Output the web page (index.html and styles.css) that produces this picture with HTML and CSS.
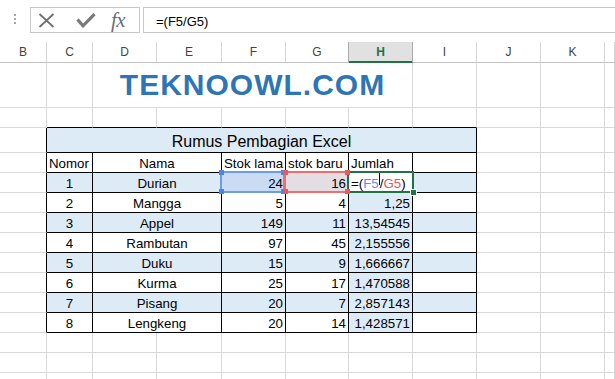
FILE: index.html
```html
<!DOCTYPE html>
<html>
<head>
<meta charset="utf-8">
<link rel="stylesheet" href="styles.css">
</head>
<body>
<div class="formula-bar">
  <div class="fb-dots"><i></i><i></i><i></i></div>
  <div class="fb-buttons">
    <svg class="ic-x" width="17" height="15" viewBox="0 0 17 15"><path d="M1.5 1 L15.5 14 M15.5 1 L1.5 14" stroke="#707070" stroke-width="1.8" fill="none"/></svg>
    <svg class="ic-ok" width="20" height="15" viewBox="0 0 20 15"><path d="M1.5 6.5 L7 12.8 L18.5 1.2" stroke="#7a7a7a" stroke-width="3.2" fill="none"/></svg>
    <span class="ic-fx">fx</span>
  </div>
  <div class="fb-input">=(F5/G5)</div>
</div>
<div class="sheet">
  <div class="hd">B</div><div class="hd">C</div><div class="hd">D</div><div class="hd">E</div><div class="hd">F</div><div class="hd hd-pre">G</div><div class="hd hd-on">H</div><div class="hd">I</div><div class="hd">J</div><div class="hd">K</div><div class="hd"></div>

  <div class="c"></div><div class="c"></div><div class="c brand span5">TEKNOOWL.COM</div><div class="c"></div><div class="c"></div><div class="c"></div><div class="c"></div>

  <div class="c"></div><div class="c ab"></div><div class="c ab"></div><div class="c ab"></div><div class="c ab"></div><div class="c ab"></div><div class="c ab"></div><div class="c ab"></div><div class="c"></div><div class="c"></div><div class="c"></div>

  <div class="c lb"></div><div class="c t bl title span7">Rumus Pembagian Excel</div><div class="c"></div><div class="c"></div><div class="c"></div>

  <div class="c lb"></div><div class="c t">Nomor</div><div class="c t ctr span2">Nama</div><div class="c t">Stok lama</div><div class="c t">stok baru</div><div class="c t">Jumlah</div><div class="c t"></div><div class="c"></div><div class="c"></div><div class="c"></div>

  <div class="c lb"></div><div class="c t ctr bl">1</div><div class="c t ctr span2 bl">Durian</div>
  <div class="c t rt sel sel-f">24<span class="rng rng-f"><i class="hn tl"></i><i class="hn tr"></i><i class="hn bl-c"></i><i class="hn br"></i></span></div>
  <div class="c t rt sel sel-g">16<span class="rng rng-g"><i class="hn tl"></i><i class="hn tr"></i><i class="hn bl-c"></i><i class="hn br"></i></span></div>
  <div class="c t sel act"><span class="ftxt">=(<span class="rf">F5</span><span class="caret"></span>/<span class="rg">G5</span>)</span><span class="act-box"><i class="fill"></i></span></div>
  <div class="c t bl"></div><div class="c"></div><div class="c"></div><div class="c"></div>

  <div class="c lb"></div><div class="c t ctr">2</div><div class="c t ctr span2">Mangga</div><div class="c t rt">5</div><div class="c t rt">4</div><div class="c t rt bl">1,25</div><div class="c t"></div><div class="c"></div><div class="c"></div><div class="c"></div>

  <div class="c lb"></div><div class="c t ctr bl">3</div><div class="c t ctr span2 bl">Appel</div><div class="c t rt bl">149</div><div class="c t rt bl">11</div><div class="c t rt bl">13,54545</div><div class="c t bl"></div><div class="c"></div><div class="c"></div><div class="c"></div>

  <div class="c lb"></div><div class="c t ctr">4</div><div class="c t ctr span2">Rambutan</div><div class="c t rt">97</div><div class="c t rt">45</div><div class="c t rt bl">2,155556</div><div class="c t"></div><div class="c"></div><div class="c"></div><div class="c"></div>

  <div class="c lb"></div><div class="c t ctr bl">5</div><div class="c t ctr span2 bl">Duku</div><div class="c t rt bl">15</div><div class="c t rt bl">9</div><div class="c t rt bl">1,666667</div><div class="c t bl"></div><div class="c"></div><div class="c"></div><div class="c"></div>

  <div class="c lb"></div><div class="c t ctr">6</div><div class="c t ctr span2">Kurma</div><div class="c t rt">25</div><div class="c t rt">17</div><div class="c t rt bl">1,470588</div><div class="c t"></div><div class="c"></div><div class="c"></div><div class="c"></div>

  <div class="c lb"></div><div class="c t ctr bl">7</div><div class="c t ctr span2 bl">Pisang</div><div class="c t rt bl">20</div><div class="c t rt bl">7</div><div class="c t rt bl">2,857143</div><div class="c t bl"></div><div class="c"></div><div class="c"></div><div class="c"></div>

  <div class="c lb"></div><div class="c t ctr">8</div><div class="c t ctr span2">Lengkeng</div><div class="c t rt">20</div><div class="c t rt">14</div><div class="c t rt bl">1,428571</div><div class="c t"></div><div class="c"></div><div class="c"></div><div class="c"></div>

  <div class="c"></div><div class="c"></div><div class="c"></div><div class="c"></div><div class="c"></div><div class="c"></div><div class="c"></div><div class="c"></div><div class="c"></div><div class="c"></div><div class="c"></div>
  <div class="c"></div><div class="c"></div><div class="c"></div><div class="c"></div><div class="c"></div><div class="c"></div><div class="c"></div><div class="c"></div><div class="c"></div><div class="c"></div><div class="c"></div>
  <div class="c"></div><div class="c"></div><div class="c"></div><div class="c"></div><div class="c"></div><div class="c"></div><div class="c"></div><div class="c"></div><div class="c"></div><div class="c"></div><div class="c"></div>
</div>
</body>
</html>
```

FILE: styles.css
```css
html, body {
  margin: 0;
  padding: 0;
  background: #ffffff;
}
body {
  width: 615px;
  height: 379px;
  overflow: hidden;
  font-family: "Liberation Sans", Arial, sans-serif;
  color: #000;
}

/* formula bar */
.formula-bar {
  display: flex;
  align-items: flex-start;
  height: 42px;
  padding-top: 7px;
  box-sizing: border-box;
}
.fb-dots {
  width: 30px;
  display: flex;
  flex-direction: column;
  align-items: center;
  gap: 2px;
  padding-top: 7px;
  padding-right: 1px;
  box-sizing: border-box;
}
.fb-dots i {
  display: block;
  width: 2px;
  height: 2px;
  background: #a6a6a6;
}
.fb-buttons {
  width: 110px;
  height: 26px;
  border: 1px solid #c8c8c8;
  box-sizing: border-box;
  display: flex;
  align-items: center;
}
.ic-x { margin-left: 7px; display: block; }
.ic-ok { margin-left: 21px; display: block; }
.ic-fx {
  margin-left: 15px;
  font-family: "Liberation Serif", "Times New Roman", serif;
  font-style: italic;
  font-size: 21px;
  line-height: 20px;
  color: #6e6e6e;
  letter-spacing: -0.5px;
}
.fb-input {
  flex: 1;
  margin-left: 3px;
  height: 26px;
  border: 1px solid #c8c8c8;
  border-right: none;
  box-sizing: border-box;
  padding: 3px 0 0 12px;
  font-size: 13px;
  line-height: 21px;
  color: #000;
}

/* sheet grid */
.sheet {
  display: grid;
  grid-template-columns: 47px 46px 64px 65px 64px 63px 64px 64px 64px 64px 10px;
  grid-template-rows: 21px 45px 20px 25px repeat(12, 20px);
}
.hd {
  border-right: 1px solid #d6d6d6;
  border-bottom: 1px solid #c2c2c2;
  box-sizing: border-box;
  text-align: center;
  font-size: 12px;
  line-height: 20px;
  color: #444;
}
.hd-pre { border-right-color: #ababab; }
.hd-on {
  background: #e1e1e1;
  border-right-color: #ababab;
  border-bottom-color: #217346;
  box-shadow: inset 0 -1px 0 #217346;
  color: #217346;
  font-weight: bold;
}

.c {
  display: flex;
  align-items: flex-end;
  padding: 0 2px;
  border-right: 1px solid #d9d9d9;
  border-bottom: 1px solid #d9d9d9;
  box-sizing: border-box;
  font-size: 13.3px;
  line-height: 16px;
  white-space: nowrap;
  min-width: 0;
}
.t {
  border-right-color: #000;
  border-bottom-color: #000;
}
.lb { border-right-color: #000; }
.ab { border-bottom-color: #000; }
.bl { background: #ddebf7; }
.ctr { justify-content: center; }
.rt { justify-content: flex-end; }
.span2 { grid-column: span 2; }
.span5 { grid-column: span 5; }
.span7 { grid-column: span 7; }

.title {
  justify-content: center;
  font-size: 16px;
  line-height: 20px;
}
.brand {
  justify-content: center;
  align-items: center;
  font-size: 30px;
  font-weight: bold;
  line-height: 34px;
  letter-spacing: 1px;
  color: #2e75b6;
}

/* range highlight overlays */
.sel { position: relative; }
.sel-f { background: #cbdbf3; }
.sel-g { background: #e4dde4; }
.act { background: #ffffff; }
.rng {
  position: absolute;
  left: -2px;
  top: -2px;
  width: 65px;
  height: 22px;
}
.rng-f { box-shadow: inset 0 0 0 2px #6c9be8; }
.rng-g { box-shadow: inset 0 0 0 2px #ee6e6e; }
.hn {
  position: absolute;
  width: 5px;
  height: 5px;
  z-index: 3;
}
.rng-f .hn { background: #4d85e6; }
.rng-g .hn { background: #e85a5e; }
.tl { left: -1px; top: -1px; }
.tr { right: -1px; top: -1px; }
.bl-c { left: -1px; bottom: -1px; }
.br { right: -1px; bottom: -1px; }

.act-box {
  position: absolute;
  left: -2px;
  top: -2px;
  width: 67px;
  height: 22px;
  box-shadow: inset 0 0 0 2px #217346;
  z-index: 2;
}
.act-box .fill {
  position: absolute;
  right: -3px;
  bottom: -3px;
  width: 5px;
  height: 5px;
  background: #217346;
  border: 1px solid #ffffff;
}
.ftxt { white-space: nowrap; }
.rf { color: #5b8fe6; }
.rg { color: #e2555e; }
.caret {
  display: inline-block;
  width: 1px;
  height: 13px;
  background: #000;
  vertical-align: 3px;
}
```
